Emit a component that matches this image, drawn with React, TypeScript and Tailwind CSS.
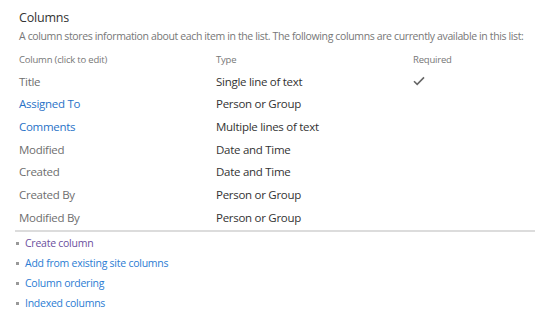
const ROWS: { name: string; type: string; link?: boolean; required?: boolean }[] = [
  { name: "Title", type: "Single line of text", required: true },
  { name: "Assigned To", type: "Person or Group", link: true },
  { name: "Comments", type: "Multiple lines of text", link: true },
  { name: "Modified", type: "Date and Time" },
  { name: "Created", type: "Date and Time" },
  { name: "Created By", type: "Person or Group" },
  { name: "Modified By", type: "Person or Group" },
];

const LINKS = [
  { text: "Create column", visited: true },
  { text: "Add from existing site columns" },
  { text: "Column ordering" },
  { text: "Indexed columns" },
];

function Check() {
  return (
    <svg width="12" height="10" viewBox="0 0 12 10" className="block">
      <path d="M1 5.2 L4.2 8.4 L11 1.4" fill="none" stroke="#666" strokeWidth="1.6" />
    </svg>
  );
}

export default function App() {
  return (
    <div
      className="w-[535px] h-[324px] bg-white overflow-hidden pl-[19px] pt-[9px]"
      style={{ fontFamily: '"Open Sans", "Segoe UI", sans-serif' }}
    >
      <h2 className="text-[12.5px] leading-[18px] text-[#333] tracking-[-0.2px]">Columns</h2>
      <p className="text-[10.5px] leading-[18px] text-[#777] whitespace-nowrap tracking-[-0.37px]">
        A column stores information about each item in the list. The following columns are currently available in this list:
      </p>

      <table className="mt-[5px] -ml-1 w-[520px] border-collapse text-left">
        <thead>
          <tr className="text-[9.5px] text-[#777] tracking-[-0.2px]">
            <th className="font-normal pl-1 h-[20px] w-[197px]">Column (click to edit)</th>
            <th className="font-normal pl-1 w-[197px]">Type</th>
            <th className="font-normal pl-1">Required</th>
          </tr>
        </thead>
        <tbody className="text-[11.5px] tracking-[-0.28px]">
          {ROWS.map((r) => (
            <tr key={r.name} className="h-[22.7px]">
              <td className={`pl-1 ${r.link ? "text-[#2872c7]" : "text-[#6e6e6e]"}`}>{r.name}</td>
              <td className="pl-1 text-[#333]">{r.type}</td>
              <td className="pl-1">{r.required ? <Check /> : null}</td>
            </tr>
          ))}
        </tbody>
      </table>

      <div className="mt-px -ml-1 h-[2px] w-[520px] bg-[#dcdcdc]" />

      <ul className="mt-[2px] -ml-[3px] flex flex-col">
        {LINKS.map((l) => (
          <li key={l.text} className="flex items-center h-[20px] gap-[6px] text-[10.5px] tracking-[-0.25px]">
            <span className="w-[3px] h-[3px] bg-[#999]" />
            <a className={l.visited ? "text-[#6b4f9e]" : "text-[#2b7cd3]"}>{l.text}</a>
          </li>
        ))}
      </ul>
    </div>
  );
}
